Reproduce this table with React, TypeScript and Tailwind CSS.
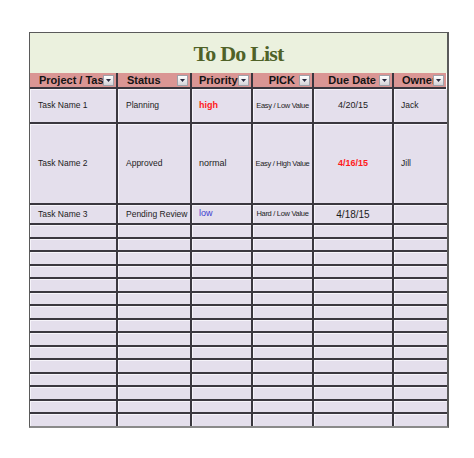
import React from 'react';

type Cell = { text: string; cls?: string };

const cols = ['Project / Task', 'Status', 'Priority', 'PICK', 'Due Date', 'Owner'];

// header alignment: left-aligned text gets clipped by the filter button,
// PICK and Due Date sit right up against it
const headAlign = ['justify-start pl-[9px]', 'justify-start pl-[9px]', 'justify-start pl-[7px]', 'justify-end pr-[4px]', 'justify-end pr-[3px]', 'justify-start pl-[8px]'];

const bodyAlign = ['justify-start pl-[8px]', 'justify-start pl-[8px]', 'justify-start pl-[7px]', 'justify-center', 'justify-center', 'justify-start pl-[7px]'];

const tasks: { h: string; cells: Cell[] }[] = [
  {
    h: 'h-[35px]',
    cells: [
      { text: 'Task Name 1' },
      { text: 'Planning' },
      { text: 'high', cls: 'text-[#ff1a1a] font-bold text-[9px]' },
      { text: 'Easy / Low Value', cls: 'text-[7.5px] tracking-[-0.3px]' },
      { text: '4/20/15', cls: 'text-[9px]' },
      { text: 'Jack' },
    ],
  },
  {
    h: 'h-[81px]',
    cells: [
      { text: 'Task Name 2' },
      { text: 'Approved' },
      { text: 'normal', cls: 'text-[9px]' },
      { text: 'Easy / High Value', cls: 'text-[7.5px] tracking-[-0.3px]' },
      { text: '4/16/15', cls: 'text-[#ff1a1a] font-bold text-[9px]' },
      { text: 'Jill' },
    ],
  },
  {
    h: 'h-[20px]',
    cells: [
      { text: 'Task Name 3' },
      { text: 'Pending Review' },
      { text: 'low', cls: 'text-[#3b3bd0] text-[9px]' },
      { text: 'Hard / Low Value', cls: 'text-[7.5px] tracking-[-0.3px]' },
      { text: '4/18/15', cls: 'text-[10px]' },
      { text: '' },
    ],
  },
];

const emptyHeights = ['h-[14px]', 'h-[13px]', 'h-[14px]', 'h-[13px]', 'h-[14px]', 'h-[13px]', 'h-[14px]', 'h-[13px]', 'h-[14px]', 'h-[13px]', 'h-[14px]', 'h-[13px]', 'h-[14px]', 'h-[13px]', 'h-[12px]'];

function FilterButton() {
  return (
    <div className="w-[11px] h-[11px] shrink-0 mr-[2px] flex items-center justify-center bg-gradient-to-b from-white to-[#d4d4d8] border border-[#a0a0a8]">
      <svg width="5" height="3" viewBox="0 0 5 3">
        <path d="M0 0 L5 0 L2.5 3 Z" fill="#2a2a40" />
      </svg>
    </div>
  );
}

function Row({ h, cells, last }: { h: string; cells: Cell[]; last?: boolean }) {
  return (
    <div className="grid grid-cols-[88px_74px_61px_61px_80px_53px]">
      {cells.map((c, i) => (
        <div
          key={i}
          className={`${h} bg-[#e4dfec] flex items-center whitespace-nowrap overflow-hidden text-[8.5px] text-[#1c1c1c] shadow-[inset_1px_1px_0_#f6f4fa] ${bodyAlign[i]} ${i < 5 ? 'border-r-2 border-r-[#3a373f]' : ''} ${last ? '' : 'border-b-2 border-b-[#3a373f]'}`}
        >
          <span className={c.cls}>{c.text}</span>
        </div>
      ))}
    </div>
  );
}

export default function App() {
  return (
    <div className="w-[474px] h-[458px] bg-white pt-[32px] pl-[29px]" style={{ fontFamily: '"Liberation Sans", Arial, sans-serif' }}>
      <div className="w-[420px] border-l border-t border-[#5a5a5a] border-r-2 border-r-[#5a5a5a] border-b-2 border-b-[#8a8a8a]">
        {/* Title band */}
        <div className="h-[40px] bg-[#ebf1de] flex items-center justify-center">
          <span className="text-[22px] tracking-[-0.8px] text-[#4f6228] font-semibold" style={{ fontFamily: '"Liberation Serif", "Times New Roman", serif' }}>
            To Do List
          </span>
        </div>

        {/* Header */}
        <div className="grid grid-cols-[88px_74px_61px_61px_80px_52px]">
          {cols.map((c, i) => (
            <div
              key={c}
              className={`h-[16px] bg-[#da9694] flex items-center border-b-2 border-b-[#3a373f] ${i < 5 ? 'border-r-2 border-r-[#3a373f]' : ''}`}
            >
              <div className={`flex-1 min-w-0 flex overflow-hidden whitespace-nowrap ${headAlign[i]}`}>
                <span className="text-[11px] font-bold text-[#141414] leading-none">{c}</span>
              </div>
              <FilterButton />
            </div>
          ))}
        </div>

        {/* Tasks */}
        {tasks.map((t, i) => (
          <Row key={i} h={t.h} cells={t.cells} />
        ))}

        {/* Empty rows */}
        {emptyHeights.map((h, i) => (
          <Row key={`e${i}`} h={h} cells={cols.map(() => ({ text: '' }))} last={i === emptyHeights.length - 1} />
        ))}
      </div>
    </div>
  );
}
